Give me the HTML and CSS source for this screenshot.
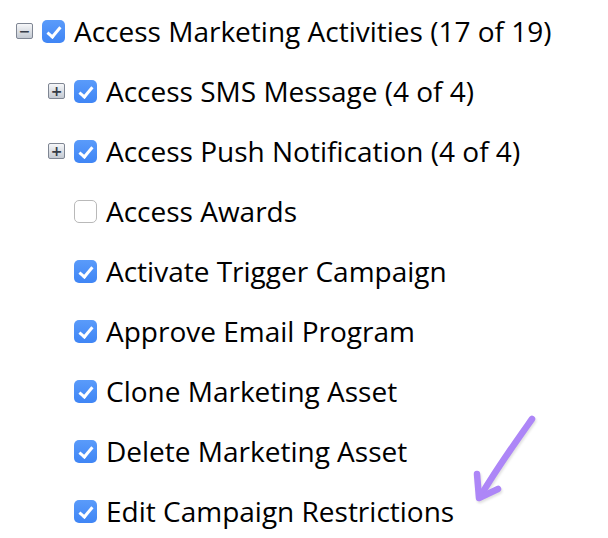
FILE: index.html
```html
<!DOCTYPE html>
<html lang="en">
<head>
    <meta charset="UTF-8">
    <title>Permissions</title>
    <link rel="stylesheet" href="styles.css">
</head>
<body>
    <ul class="tree">
        <li class="node">
            <div class="row">
                <span class="toggle"><span class="sign">&minus;</span></span>
                <span class="check on"></span>
                <span class="label">Access Marketing Activities (17 of 19)</span>
            </div>
            <ul class="children">
                <li class="row">
                    <span class="toggle"><span class="sign">+</span></span>
                    <span class="check on"></span>
                    <span class="label">Access SMS Message (4 of 4)</span>
                </li>
                <li class="row">
                    <span class="toggle"><span class="sign">+</span></span>
                    <span class="check on"></span>
                    <span class="label">Access Push Notification (4 of 4)</span>
                </li>
                <li class="row leaf">
                    <span class="check"></span>
                    <span class="label">Access Awards</span>
                </li>
                <li class="row leaf">
                    <span class="check on"></span>
                    <span class="label">Activate Trigger Campaign</span>
                </li>
                <li class="row leaf">
                    <span class="check on"></span>
                    <span class="label">Approve Email Program</span>
                </li>
                <li class="row leaf">
                    <span class="check on"></span>
                    <span class="label">Clone Marketing Asset</span>
                </li>
                <li class="row leaf">
                    <span class="check on"></span>
                    <span class="label">Delete Marketing Asset</span>
                </li>
                <li class="row leaf">
                    <span class="check on"></span>
                    <span class="label">Edit Campaign Restrictions</span>
                </li>
            </ul>
        </li>
    </ul>

    <!-- hand-drawn annotation arrow -->
    <svg class="arrow" width="80" height="95" viewBox="0 0 80 95">
        <g fill="none" stroke="#ad86f7" stroke-width="6.5" stroke-linecap="round" stroke-linejoin="round">
            <path d="M67 9 C50 33 32 58 15 87"/>
            <path d="M12 64 L14 88 L33 79"/>
        </g>
    </svg>
</body>
</html>
```

FILE: styles.css
```css
body {
    margin: 0;
    padding: 1px 0 0 16px;
    background: #fff;
    font-family: "Open Sans", "DejaVu Sans", sans-serif;
    color: #000;
    width: 608px;
    height: 538px;
    position: relative;
    box-sizing: border-box;
    overflow: hidden;
}

.tree,
.children {
    list-style: none;
    margin: 0;
    padding: 0;
}

.children {
    padding-left: 32px;
}

.row {
    display: flex;
    align-items: center;
    height: 60px;
}

.row.leaf {
    padding-left: 26px;
}

.toggle {
    width: 17px;
    height: 16px;
    margin-right: 9px;
    border: 1px solid #7f8693;
    border-radius: 2px;
    background: linear-gradient(#f6f7f9, #c3c9d2);
    box-sizing: border-box;
    display: flex;
    align-items: center;
    justify-content: center;
    flex-shrink: 0;
}

.sign {
    font-family: "DejaVu Sans", sans-serif;
    font-weight: bold;
    font-size: 14px;
    line-height: 1;
    color: #353c48;
}

.check {
    width: 23px;
    height: 23px;
    border: 1px solid #b9b9b9;
    border-radius: 5px;
    background: #fff;
    box-sizing: border-box;
    margin-right: 9px;
    flex-shrink: 0;
    position: relative;
}

.check.on {
    border: none;
    background: linear-gradient(#5a9bfa, #3f85f5);
}

.check.on::after {
    content: "";
    position: absolute;
    left: 8px;
    top: 4px;
    width: 5px;
    height: 11px;
    border: solid #fff;
    border-width: 0 3px 3px 0;
    transform: rotate(40deg);
}

.label {
    font-size: 28px;
    line-height: 1;
    white-space: nowrap;
}

.arrow {
    position: absolute;
    left: 465px;
    top: 410px;
    filter: drop-shadow(1px 2px 1px rgba(0, 0, 0, 0.12));
}
```
